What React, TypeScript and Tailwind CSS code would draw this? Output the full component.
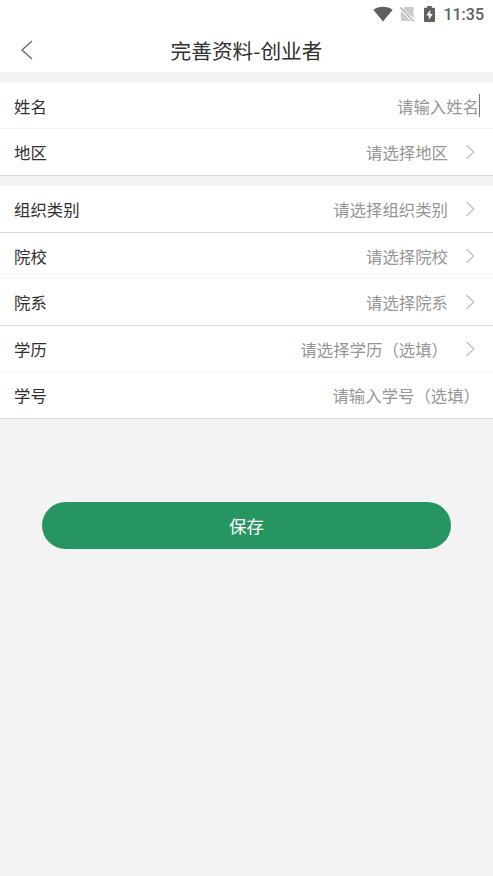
type Field = {
  label: string;
  placeholder: string;
  select?: boolean;
  focused?: boolean;
  className: string;
};

const basicFields: Field[] = [
  { label: "姓名", placeholder: "请输入姓名", focused: true, className: "h-[46px] border-[#f3f3f3]" },
  { label: "地区", placeholder: "请选择地区", select: true, className: "h-[47px] border-[#dcdcdc]" },
];

const schoolFields: Field[] = [
  { label: "组织类别", placeholder: "请选择组织类别", select: true, className: "h-[47px] border-[#dcdcdc]" },
  { label: "院校", placeholder: "请选择院校", select: true, className: "h-[46px] border-[#f5f5f5]" },
  { label: "院系", placeholder: "请选择院系", select: true, className: "h-[47px] border-[#dcdcdc]" },
  { label: "学历", placeholder: "请选择学历（选填）", select: true, className: "h-[46px] border-[#f7f7f7]" },
  { label: "学号", placeholder: "请输入学号（选填）", className: "h-[47px] border-[#dcdcdc]" },
];

function StatusBar() {
  return (
    <div className="flex h-[27px] items-center justify-end pr-[9px] text-[#606060]">
      <svg className="mr-[7px]" width="20" height="16" viewBox="0 0 20 16" fill="currentColor">
        <path d="M0.3 3.8C5.6-.3 14.4-.3 19.7 3.8L10 15.6Z" />
      </svg>
      <svg className="mr-2.5" width="14" height="16" viewBox="0 0 14 16">
        <path d="M5 1h7.5q1 0 1 1v10.3L3 2.8zM0.8 4.8L11.2 15H1.8q-1 0-1-1z" fill="#cbcbcb" />
        <path d="M0.3 1.5L13.6 15.2" stroke="#a5a5a5" strokeWidth="1.2" />
      </svg>
      <svg className="mr-2" width="11" height="16" viewBox="0 0 11 16">
        <path d="M3.2 0h4.6v1.8H10q1 0 1 1V15q0 1-1 1H1q-1 0-1-1V2.8q0-1 1-1h2.2z" fill="currentColor" />
        <path d="M6.3 3.8L2.3 9.5h2.5v4.2L8.8 8H6.3z" fill="#fff" />
      </svg>
      <span className="pt-0.5 font-[Roboto] text-[16px] leading-none font-medium">11:35</span>
    </div>
  );
}

function FieldRow({ field }: { field: Field }) {
  return (
    <div className={`flex items-center justify-between border-b bg-white pl-3.5 ${field.className}`}>
      <span className="text-[#303030]">{field.label}</span>
      <div className={`flex items-center text-[#969696] ${field.select ? "pr-[18px]" : "pr-[13px]"}`}>
        <span>{field.placeholder}</span>
        {field.focused && <i className="h-[23px] w-px bg-[#777]" />}
        {field.select && (
          <svg className="ml-[17px]" width="10" height="16" viewBox="0 0 10 16" fill="none" stroke="#bdbdbd" strokeWidth="1.2">
            <path d="M1.5 1L8.8 8L1.5 15" />
          </svg>
        )}
      </div>
    </div>
  );
}

export default function App() {
  return (
    <div className="min-h-screen bg-[#f3f3f3] font-['Noto_Sans_CJK_SC',sans-serif] text-[16.4px] leading-6">
      <header className="bg-white">
        <StatusBar />
        <div className="grid h-[45px] grid-cols-[48px_1fr_48px] items-center">
          <button className="pl-5" aria-label="返回">
            <svg width="14" height="20" viewBox="0 0 14 20" fill="none" stroke="#6b6b6b" strokeWidth="1.4">
              <path d="M12 1L2 10L12 19" />
            </svg>
          </button>
          <h1 className="text-center text-[20.7px] text-[#303030]">完善资料-创业者</h1>
        </div>
      </header>

      <section className="mt-[11px]">
        {basicFields.map((field) => (
          <FieldRow key={field.label} field={field} />
        ))}
      </section>

      <section className="mt-2.5">
        {schoolFields.map((field) => (
          <FieldRow key={field.label} field={field} />
        ))}
      </section>

      <div className="px-[42px] pt-[83px]">
        <button className="h-[47px] w-full rounded-full bg-[#279562] text-[17.5px] text-white">保存</button>
      </div>
    </div>
  );
}
